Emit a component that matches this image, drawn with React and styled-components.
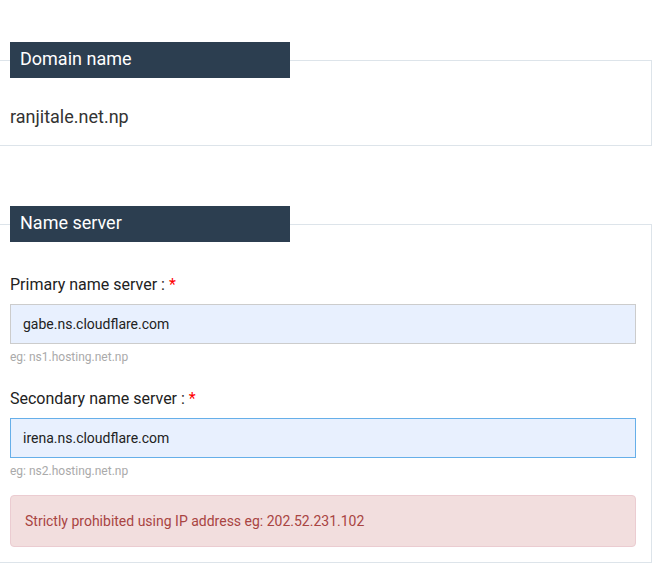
import React from "react";
import styled, { createGlobalStyle } from "styled-components";

const Global = createGlobalStyle`
  * { box-sizing: border-box; }
  html, body { margin: 0; padding: 0; background: #fff; }
  body { font-family: Roboto, "Open Sans", "Liberation Sans", sans-serif; color: #333; overflow: hidden; }
`;

const Page = styled.div`
  width: 666px;
  padding-top: 42px;
  display: flex;
  flex-direction: column;
  gap: 60px;
`;

const Panel = styled.fieldset`
  margin: 0 14px 0 -6px;
  padding: 0 15px 15px;
  border: 1px solid #dde4ea;
  min-width: 0;
`;

const Legend = styled.legend`
  width: 280px;
  height: 36px;
  padding: 0 10px 2px;
  margin: 0;
  background: #2c3e50;
  color: #fff;
  font-size: 18px;
  line-height: 34px;
`;

const Value = styled.div`
  margin-top: 26px;
  font-size: 18px;
  line-height: 26px;
  color: #333;
`;

const Fields = styled.div`
  padding-top: 32px;
  display: flex;
  flex-direction: column;
`;

const Group = styled.div`
  display: flex;
  flex-direction: column;
  margin-bottom: ${(p) => p.$gap}px;
`;

const Label = styled.label`
  font-size: 16px;
  line-height: 21px;
  color: #222;
  margin-bottom: 9px;
`;

const Star = styled.span`
  color: #f00;
`;

const Input = styled.input`
  height: 40px;
  width: 100%;
  padding: 0 12px;
  font-family: inherit;
  font-size: 14px;
  color: #222;
  background: #e8f0fe;
  border: 1px solid ${(p) => (p.$focus ? "#66afe9" : "#ccc")};
  border-radius: 0;
  outline: none;
`;

const Hint = styled.div`
  margin-top: 5px;
  font-size: 12px;
  line-height: 17px;
  color: #aaa;
`;

const Alert = styled.div`
  padding: 15px 14px;
  font-size: 14px;
  line-height: 20px;
  color: #a94442;
  background: #f2dede;
  border: 1px solid #ebccd1;
  border-radius: 4px;
`;

export default function App() {
  return (
    <>
      <Global />
      <Page>
        <Panel>
          <Legend>Domain name</Legend>
          <Value>ranjitale.net.np</Value>
        </Panel>
        <Panel>
          <Legend>Name server</Legend>
          <Fields>
            <Group $gap={22}>
              <Label>
                Primary name server : <Star>*</Star>
              </Label>
              <Input defaultValue="gabe.ns.cloudflare.com" />
              <Hint>eg: ns1.hosting.net.np</Hint>
            </Group>
            <Group $gap={15}>
              <Label>
                Secondary name server : <Star>*</Star>
              </Label>
              <Input $focus defaultValue="irena.ns.cloudflare.com" />
              <Hint>eg: ns2.hosting.net.np</Hint>
            </Group>
            <Alert>Strictly prohibited using IP address eg: 202.52.231.102</Alert>
          </Fields>
        </Panel>
      </Page>
    </>
  );
}
